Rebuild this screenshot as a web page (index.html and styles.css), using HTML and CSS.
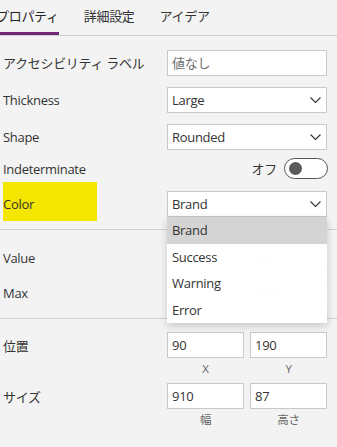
FILE: index.html
```html
<!DOCTYPE html>
<html lang="ja">
  <head>
    <meta charset="UTF-8">
    <meta name="viewport" content="width=device-width, initial-scale=1.0">
    <title>プロパティ</title>
    <link rel="stylesheet" href="styles.css">
  </head>
  <body>
    <!-- Tabs -->
    <nav class="tabs">
      <div class="tab active">プロパティ</div>
      <div class="tab">詳細設定</div>
      <div class="tab">アイデア</div>
    </nav>

    <!-- Main properties -->
    <section class="group group-main">
      <div class="row">
        <div class="label">アクセシビリティ ラベル</div>
        <div class="field placeholder">値なし</div>
      </div>
      <div class="row">
        <div class="label">Thickness</div>
        <div class="field select">
          <span>Large</span>
          <svg class="chevron" width="11" height="6" viewBox="0 0 11 6"><path d="M0.5 0.5 L5.5 5.5 L10.5 0.5" /></svg>
        </div>
      </div>
      <div class="row">
        <div class="label">Shape</div>
        <div class="field select">
          <span>Rounded</span>
          <svg class="chevron" width="11" height="6" viewBox="0 0 11 6"><path d="M0.5 0.5 L5.5 5.5 L10.5 0.5" /></svg>
        </div>
      </div>
      <div class="row row-toggle">
        <div class="label">Indeterminate</div>
        <div class="toggle-wrap">
          <span class="toggle-text">オフ</span>
          <span class="switch"><span class="knob"></span></span>
        </div>
      </div>
      <div class="row row-color">
        <div class="label highlight">Color</div>
        <div class="field select open">
          <span>Brand</span>
          <svg class="chevron" width="11" height="6" viewBox="0 0 11 6"><path d="M0.5 0.5 L5.5 5.5 L10.5 0.5" /></svg>
          <!-- Open dropdown -->
          <ul class="menu">
            <li class="selected">Brand</li>
            <li>Success</li>
            <li>Warning</li>
            <li>Error</li>
          </ul>
        </div>
      </div>
    </section>

    <!-- Value / Max -->
    <section class="group group-values">
      <div class="row row-value">
        <div class="label">Value</div>
        <div class="pair">
          <div></div>
          <div class="field">50</div>
        </div>
      </div>
      <div class="row row-value">
        <div class="label">Max</div>
        <div class="pair">
          <div></div>
          <div class="field">100</div>
        </div>
      </div>
    </section>

    <!-- Position / Size -->
    <section class="group group-layout">
      <div class="row row-pair">
        <div class="label">位置</div>
        <div class="pair">
          <div class="cell">
            <div class="field">90</div>
            <div class="caption">X</div>
          </div>
          <div class="cell">
            <div class="field">190</div>
            <div class="caption">Y</div>
          </div>
        </div>
      </div>
      <div class="row row-pair">
        <div class="label">サイズ</div>
        <div class="pair">
          <div class="cell">
            <div class="field">910</div>
            <div class="caption">幅</div>
          </div>
          <div class="cell">
            <div class="field">87</div>
            <div class="caption">高さ</div>
          </div>
        </div>
      </div>
    </section>
  </body>
</html>
```

FILE: styles.css
```css
/* General */
* {
  box-sizing: border-box;
}

body {
  margin: 0;
  width: 337px;
  height: 447px;
  overflow: hidden;
  background: #f3f3f3;
  font-family: "Open Sans", "Noto Sans CJK JP", sans-serif;
  font-size: 13px;
  letter-spacing: -0.3px;
  color: #333;
}

/* Tabs */
.tabs {
  display: flex;
  gap: 25px;
  height: 36px;
  border-bottom: 1px solid #cfcfcf;
}

.tab {
  height: 35px;
  line-height: 32px;
  border-bottom: 3px solid transparent;
  color: #333;
}

.tab.active {
  margin-left: -4px;
  border-bottom-color: #742774;
  color: #222;
}

/* Groups */
.group {
  display: flex;
  flex-direction: column;
  padding: 0 10px 0 3px;
  border-bottom: 1px solid #d0d0d0;
}

.group-main {
  padding-top: 8px;
  padding-bottom: 8px;
}

.group-values {
  padding-top: 10px;
  padding-bottom: 8px;
}

.group-layout {
  padding-top: 13px;
  border-bottom: none;
}

.row {
  display: grid;
  grid-template-columns: 164px 160px;
  align-items: center;
  height: 37px;
}

.row-toggle {
  height: 27px;
}

.row-color {
  height: 39px;
  align-items: end;
}

.row-value {
  height: 35px;
}

.row-pair {
  height: auto;
  align-items: start;
}

.label {
  white-space: nowrap;
}

.row-pair .label {
  line-height: 26px;
  padding-top: 1px;
}

.highlight {
  align-self: stretch;
  width: 94px;
  padding-top: 9px;
  line-height: 26px;
  background: #f4e600;
}

/* Inputs */
.field {
  position: relative;
  height: 26px;
  line-height: 24px;
  padding: 0 4px;
  background: #fff;
  border: 1px solid #c8c8c8;
  color: #333;
}

.placeholder {
  color: #6e6e6e;
}

.select {
  display: flex;
  justify-content: space-between;
  align-items: center;
}

.row-color .select {
  margin-bottom: 4px;
}

.chevron {
  margin-right: 1px;
  fill: none;
  stroke: #333;
  stroke-width: 1.1;
}

/* Toggle */
.toggle-wrap {
  display: flex;
  justify-content: flex-end;
  align-items: center;
  gap: 7px;
}

.toggle-text {
  color: #333;
}

.switch {
  display: flex;
  align-items: center;
  width: 44px;
  height: 21px;
  margin-right: -1px;
  border: 1px solid #555;
  border-radius: 11px;
  padding-left: 4px;
  background: #fff;
}

.knob {
  width: 13px;
  height: 13px;
  border-radius: 50%;
  background: #5b5b5b;
}

/* Dropdown menu */
.menu {
  position: absolute;
  top: 25px;
  left: -1px;
  width: 160px;
  margin: 0;
  padding: 0;
  list-style: none;
  background: rgba(255, 255, 255, 0.985);
  box-shadow: 0 3px 8px rgba(0, 0, 0, 0.18);
  z-index: 5;
}

.menu li {
  height: 26.5px;
  line-height: 26.5px;
  padding-left: 5px;
  color: #333;
}

.menu li.selected {
  background: #d4d4d4;
}

/* Pairs of fields */
.pair {
  display: grid;
  grid-template-columns: 77px 77px;
  gap: 6px;
}

.caption {
  height: 25px;
  padding-top: 3px;
  line-height: 16px;
  text-align: center;
  font-size: 11.5px;
  color: #666;
}
```
